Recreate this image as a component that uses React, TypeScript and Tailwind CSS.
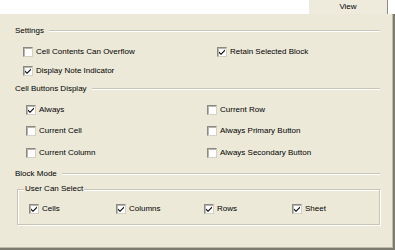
import React from "react";

const font = { fontFamily: '"Liberation Sans", Arial, sans-serif' };

function Box({ checked }: { checked: boolean }) {
  return (
    <div className="w-[10px] h-[10px] bg-white border-t border-l border-[#8a8a82] border-r border-b border-r-[#d4d0c8] border-b-[#d4d0c8] shadow-[inset_1px_1px_0_#b8b6aa] flex items-center justify-center shrink-0">
      {checked && (
        <svg width="8" height="8" viewBox="0 0 8 8">
          <path d="M1 3.5 L3 5.5 L7 1.5 L7 3 L3 7 L1 5 Z" fill="#000" />
        </svg>
      )}
    </div>
  );
}

function Check({ label, checked = false }: { label: string; checked?: boolean }) {
  return (
    <div className="flex items-center gap-[3px] h-[14px]">
      <Box checked={checked} />
      <span className="text-[8px] leading-none text-black whitespace-nowrap">{label}</span>
    </div>
  );
}

function Header({ label }: { label: string }) {
  return (
    <div className="flex items-center h-[14px] pl-[15px] pr-[13px] gap-[5px]">
      <span className="text-[8px] leading-none text-black whitespace-nowrap">{label}</span>
      <div className="flex-1 border-t border-[#c8c5b4] border-b border-b-white" />
    </div>
  );
}

export default function App() {
  return (
    <div style={font} className="w-[395px] h-[250px] bg-white flex flex-col">
      <div className="h-[14px] flex justify-end pr-[7px]">
        <div className="w-[80px] h-[14px] bg-[#eeebdd] border-l border-white border-r border-r-[#8e8c80] flex items-center justify-center">
          <span className="text-[8px] leading-none text-black">View</span>
        </div>
      </div>
      <div className="h-[236px] bg-[#ece9d8] border-r-2 border-b-2 border-r-[#7d7b70] border-b-[#7d7b70] shadow-[inset_-1px_-1px_0_#bdbaa9] flex flex-col pt-[10px]">
        <Header label="Settings" />
        <div className="flex mt-[7px]">
          <div className="pl-[23px] w-[217px]">
            <Check label="Cell Contents Can Overflow" />
          </div>
          <Check label="Retain Selected Block" checked />
        </div>
        <div className="flex mt-[5px] pl-[23px]">
          <Check label="Display Note Indicator" checked />
        </div>
        <div className="mt-[4px]">
          <Header label="Cell Buttons Display" />
        </div>
        <div className="grid grid-cols-[181px_1fr] pl-[26px] gap-y-[7px] mt-[7px]">
          <Check label="Always" checked />
          <Check label="Current Row" />
          <Check label="Current Cell" />
          <Check label="Always Primary Button" />
          <div className="mt-[1px]">
            <Check label="Current Column" />
          </div>
          <div className="mt-[1px]">
            <Check label="Always Secondary Button" />
          </div>
        </div>
        <div className="mt-[7px]">
          <Header label="Block Mode" />
        </div>
        <div className="mt-[8px] ml-[17px] mr-[13px] relative border border-[#c8c5b4] shadow-[1px_1px_0_#fff,inset_1px_1px_0_#fff] pt-[12px] pb-[8px]">
          <span className="absolute left-[6px] top-[-5px] bg-[#ece9d8] px-[1px] text-[8px] leading-none text-black">
            User Can Select
          </span>
          <div className="grid grid-cols-[87px_88px_88px_1fr] pl-[11px]">
            <Check label="Cells" checked />
            <Check label="Columns" checked />
            <Check label="Rows" checked />
            <Check label="Sheet" checked />
          </div>
        </div>
      </div>
    </div>
  );
}
